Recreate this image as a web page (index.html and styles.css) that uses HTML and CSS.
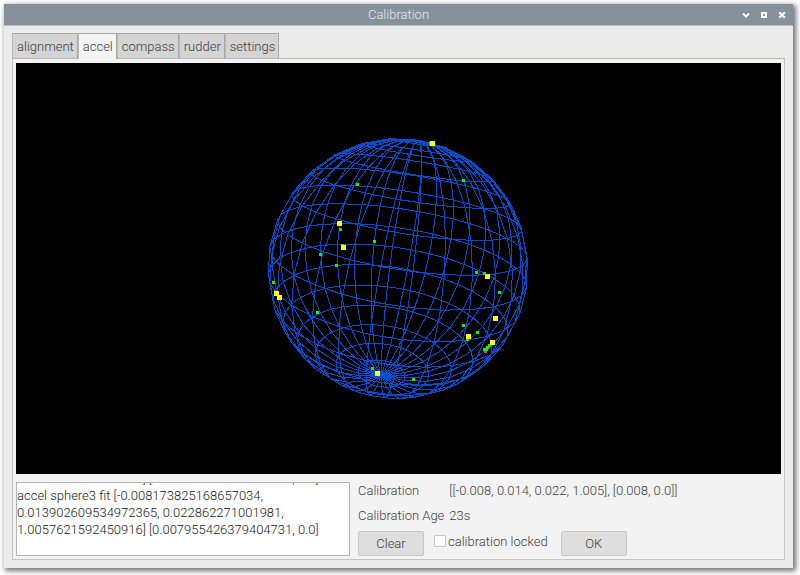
FILE: index.html
```html
<!DOCTYPE html>
<html lang="en">
<head>
<meta charset="utf-8">
<title>Calibration</title>
<link rel="stylesheet" href="styles.css">
</head>
<body>
<main class="window">
  <header class="titlebar">
    <h1 class="title">Calibration</h1>
    <div class="window-buttons">
      <button class="window-button" type="button" aria-label="Minimize"><svg viewBox="0 0 8 8"><path d="M1 2.5 4 5.5 7 2.5"/></svg></button>
      <button class="window-button" type="button" aria-label="Maximize"><svg viewBox="0 0 8 8"><path d="M2 2h4v4h-4z"/></svg></button>
      <button class="window-button" type="button" aria-label="Close"><svg viewBox="0 0 8 8"><path d="M1.2 1.2 6.8 6.8M6.8 1.2 1.2 6.8"/></svg></button>
    </div>
  </header>
  <div class="body">
    <div class="tabs" role="tablist">
      <button class="tab" type="button" role="tab">alignment</button>
      <button class="tab tab-active" type="button" role="tab" aria-selected="true">accel</button>
      <button class="tab" type="button" role="tab">compass</button>
      <button class="tab" type="button" role="tab">rudder</button>
      <button class="tab" type="button" role="tab">settings</button>
    </div>
    <section class="page">
      <div class="plot">
        <svg class="scene" viewBox="16 63 765 411" role="img" aria-label="Accelerometer calibration sphere">
          <path class="wire" id="wire"/>
          <g class="points" id="points"></g>
        </svg>
      </div>
      <div class="controls">
        <textarea class="log" id="log" readonly aria-label="Calibration log">accel sphere3 fit [-0.008214736509412387, 0.013872460953418236, 0.02279146320571948,
1.0058625058617465] [0.007948158601688278, 0.0]
accel sphere3 fit [-0.008173825168657034, 0.013902609534972365, 0.022862271001981, 1.0057621592450916] [0.007955426379404731, 0.0]
</textarea>
        <div class="details">
          <dl class="facts">
            <dt>Calibration</dt><dd>[[-0.008, 0.014, 0.022, 1.005], [0.008, 0.0]]</dd>
            <dt>Calibration Age</dt><dd>23s</dd>
          </dl>
          <div class="actions">
            <button class="button" type="button">Clear</button>
            <label class="lock"><input class="check" type="checkbox">calibration locked</label>
            <button class="button" type="button">OK</button>
          </div>
        </div>
      </div>
    </section>
  </div>
</main>
<script src="sphere.js"></script>
</body>
</html>
```
FILE: styles.css
```css
* { box-sizing: border-box; }
body {
  margin: 0;
  height: 100vh;
  padding: 4px 7px 7px 4px;
  background: #fff;
  color: #3c4042;
  font: 300 13px/17px Roboto, sans-serif;
}
button, textarea, input { font: inherit; color: inherit; margin: 0; }
.window {
  height: 100%;
  display: flex;
  flex-direction: column;
  background: #ececec;
  box-shadow: 2px 2px 5px 1px rgba(0, 0, 0, 0.55);
}
.titlebar {
  display: grid;
  grid-template-columns: 1fr auto 1fr;
  align-items: center;
  height: 22px;
  padding: 0 6px;
  background: #87919b;
  border-bottom: 1px solid #b4babf;
  color: #e4e7ea;
}
.title { grid-column: 2; margin: 0; font: inherit; }
.window-buttons { display: flex; justify-content: flex-end; gap: 8px; }
.window-button { display: flex; padding: 1px; border: 0; background: none; }
.window-button svg { width: 8px; height: 8px; fill: none; stroke: #fff; stroke-width: 2; }
.body { flex: 1; display: flex; flex-direction: column; min-height: 0; padding: 7px 8px 8px 8px; }
.tabs { display: flex; height: 25px; }
.tab {
  padding: 0 3px 0 4px;
  border: 1px solid #a9a9a9;
  border-left-color: #b8b8b8;
  border-bottom: 0;
  background: #d4d4d4;
}
.tab-active { background: #f4f4f4; z-index: 1; margin-bottom: -1px; }
.page {
  flex: 1;
  display: flex;
  flex-direction: column;
  min-height: 0;
  padding: 4px 3px 3px 3px;
  background: #f3f3f3;
  border: 1px solid #c4c4c4;
  border-top-color: #b2b4ae;
}
.plot { flex: 1; min-height: 0; background: #000; }
.scene { display: block; width: 100%; height: 100%; }
.wire { fill: none; stroke: #004ed4; stroke-width: 1; shape-rendering: crispEdges; }
.points { shape-rendering: crispEdges; }
.fit { fill: #ff0; }
.sample { fill: #00fa00; }
.reject { fill: #e04030; }
.controls { display: flex; gap: 8px; padding-top: 8px; }
.log {
  flex: 0 0 334px;
  height: 74px;
  padding: 0;
  border: 1px solid #b5b5b5;
  background: #fff;
  color: #1a1a1a;
  overflow: hidden;
  resize: none;
}
.details { flex: 1; }
.facts {
  display: grid;
  grid-template-columns: max-content 1fr;
  gap: 8px 5px;
  margin: 0 0 7px;
}
.facts dd { margin: 0; }
.actions { display: flex; }
.button {
  width: 66px;
  height: 25px;
  padding: 0;
  border: 1px solid #c6c6c6;
  border-radius: 2px;
  background: #dedede;
}
.lock { display: flex; align-items: center; gap: 2px; height: 20px; margin: 0 13px 0 10px; }
.check {
  appearance: none;
  width: 12px;
  height: 12px;
  border: 1px solid #c8c8c8;
  border-radius: 1px;
  background: #fff;
}
```
FILE: sphere.js
```js
// Perspective wireframe sphere; far and near sides are both visible.
const cx = 398, cy = 268.5, dist = 3.4, radius = 130;
const focal = radius * Math.sqrt(dist * dist - 1);
const rad = Math.PI / 180;
const stacks = 15, slices = 32, phase = 6;
const c = 0.315, s = Math.sqrt(1 - c * c);
const ux = 0.155, uy = -0.988;
const north = [s * ux, s * uy, c];
const back = [c * ux, c * uy, -s];
const east = [-uy, ux, 0];

function project(polar, azimuth) {
  const a = Math.cos(polar), b = Math.sin(polar) * Math.cos(azimuth), e = Math.sin(polar) * Math.sin(azimuth);
  const p = [0, 1, 2].map(i => a * north[i] + b * back[i] + e * east[i]);
  const k = focal / (dist - p[2]);
  return (cx + p[0] * k).toFixed(1) + " " + (cy + p[1] * k).toFixed(1);
}

const vertex = (i, j) => project(i * Math.PI / stacks, (phase + j * 360 / slices) * rad);
let d = "";
for (let j = 0; j < slices; j++) {
  for (let i = 0; i <= stacks; i++) d += (i ? "L" : "M") + vertex(i, j);
}
for (let i = 1; i < stacks; i++) {
  for (let j = 0; j <= slices; j++) d += (j ? "L" : "M") + vertex(i, j);
}
document.getElementById("wire").setAttribute("d", d);

const samples = [[357, 184], [463, 180], [430, 143], [340, 229], [342, 245], [374, 241], [320, 254],
  [336, 265], [273, 282], [317, 312], [372, 368], [413, 379], [476, 272], [484, 273], [499, 292],
  [463, 325], [477, 332], [467, 339], [489, 345], [487, 347], [484, 349], [486, 349]];
const fits = [[432, 143], [339, 223], [343, 247], [276, 293], [279, 297], [377, 373], [487, 276],
  [495, 318], [468, 336], [492, 342]];
const squares = (list, size, name) => list.map(([x, y]) =>
  `<rect class="${name}" x="${x - (size >> 1)}" y="${y - (size >> 1)}" width="${size}" height="${size}"/>`).join("");
document.getElementById("points").innerHTML =
  squares([[485, 351]], 3, "reject") + squares(samples, 3, "sample") + squares(fits, 5, "fit");

const log = document.getElementById("log");
document.fonts.ready.then(() => { log.scrollTop = log.scrollHeight; });
```
